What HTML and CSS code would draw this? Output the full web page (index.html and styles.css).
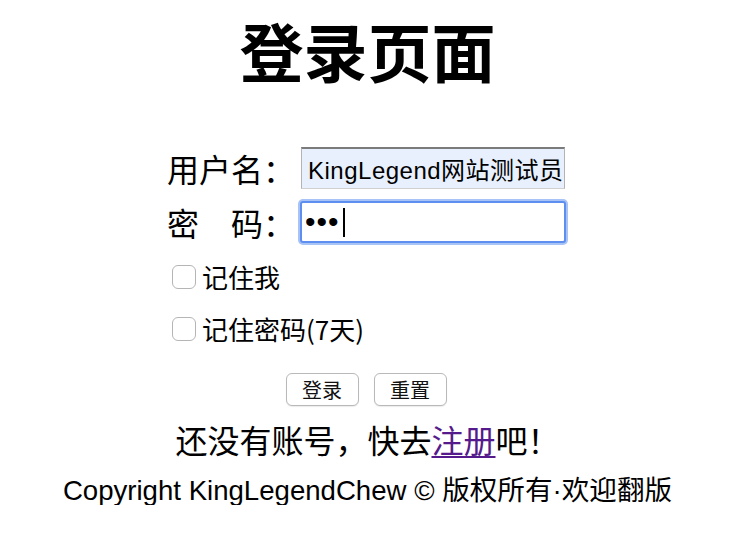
FILE: index.html
```html
<!DOCTYPE html>
<html lang="zh-CN">
<head>
<meta charset="utf-8">
<title>登录页面</title>
<link rel="stylesheet" href="styles.css">
</head>
<body>
<div class="page">
  <h1 class="title">登录页面</h1>
  <form class="login">
    <div class="grid">
      <label class="lbl" for="user">用户名：</label>
      <input class="field autofill" id="user" type="text" value="KingLegend网站测试员">
      <label class="lbl" for="pwd">密　码：</label>
      <div class="pwd-wrap">
        <input class="field focused" id="pwd" type="password" value="123">
        <span class="caret"></span>
      </div>
    </div>
    <label class="check"><span class="box"></span>记住我</label>
    <label class="check check2"><span class="box"></span>记住密码(7天)</label>
    <div class="buttons">
      <button type="button" class="btn">登录</button>
      <button type="button" class="btn">重置</button>
    </div>
  </form>
  <p class="reg">还没有账号，快去<a href="#" class="link">注册</a>吧！</p>
  <p class="copy">Copyright KingLegendChew © 版权所有·欢迎翻版</p>
</div>
</body>
</html>
```

FILE: styles.css
```css
html, body {
  margin: 0;
  padding: 0;
  background: #ffffff;
}
body {
  font-family: "Liberation Sans", "Noto Sans CJK SC", sans-serif;
  color: #000;
}
.page {
  width: 735px;
  display: flex;
  flex-direction: column;
  align-items: center;
}
.title {
  margin: 17px 0 0;
  font-family: "Noto Sans CJK SC", sans-serif;
  font-size: 64px;
  line-height: 64px;
  font-weight: 700;
}
.login {
  width: 401px;
  margin-top: 66px;
  display: flex;
  flex-direction: column;
}
.grid {
  display: grid;
  grid-template-columns: 128px 266px;
  column-gap: 6px;
  row-gap: 12px;
  align-items: center;
}
.lbl {
  font-family: "Noto Sans CJK SC", sans-serif;
  font-size: 32px;
  line-height: 42px;
  white-space: nowrap;
}
.field {
  box-sizing: border-box;
  width: 264px;
  height: 42px;
  margin: 0;
  padding: 0 0 0 5px;
  font-family: "Liberation Sans", "Noto Sans CJK SC", sans-serif;
  font-size: 24px;
  color: #000;
  outline: none;
}
.autofill {
  background: #e8f0fe;
  border-style: solid;
  border-width: 2px 1px 1px 1px;
  border-color: #7b7b7b #b4b4b4 #d0d0d0 #b4b4b4;
  padding-left: 6px;
  letter-spacing: 0.5px;
}
.pwd-wrap {
  position: relative;
  width: 264px;
  height: 42px;
}
.focused {
  width: 266px;
  margin-left: -1px;
  background: #fff;
  border: 2px solid #5e8ff0;
  border-radius: 3px;
  box-shadow: 0 0 0 2px #a8c3f6;
  padding-left: 3px;
  font-size: 30px;
  letter-spacing: 1px;
}
.caret {
  position: absolute;
  left: 42px;
  top: 7px;
  width: 2px;
  height: 29px;
  background: #000;
}
.check {
  display: flex;
  align-items: center;
  height: 30px;
  padding-left: 5px;
  margin-top: 19px;
  font-family: "Noto Sans CJK SC", sans-serif;
  font-size: 26px;
  line-height: 30px;
}
.check2 {
  margin-top: 22px;
}
.box {
  box-sizing: border-box;
  width: 24px;
  height: 24px;
  border: 1.5px solid #b5b5b5;
  border-radius: 6px;
  background: #fff;
  margin-right: 6px;
}
.buttons {
  display: flex;
  justify-content: center;
  gap: 15px;
  margin-top: 29px;
  padding-right: 3px;
}
.btn {
  box-sizing: border-box;
  width: 73px;
  height: 33px;
  padding: 0;
  background: #fff;
  border: 1px solid #b9b9b9;
  border-radius: 6px;
  box-shadow: 0 1px 1px rgba(0,0,0,0.08);
  font-family: "Noto Sans CJK SC", sans-serif;
  font-size: 20px;
  line-height: 31px;
  color: #111;
}
.reg {
  margin: 17px 0 0;
  font-family: "Noto Sans CJK SC", sans-serif;
  font-size: 32px;
  line-height: 32px;
}
.link {
  color: #551a8b;
  text-decoration: underline;
  text-underline-offset: 3px;
  text-decoration-thickness: 2px;
}
.copy {
  margin: 22px 0 0;
  font-size: 27.6px;
  line-height: 28px;
  white-space: nowrap;
}
```
